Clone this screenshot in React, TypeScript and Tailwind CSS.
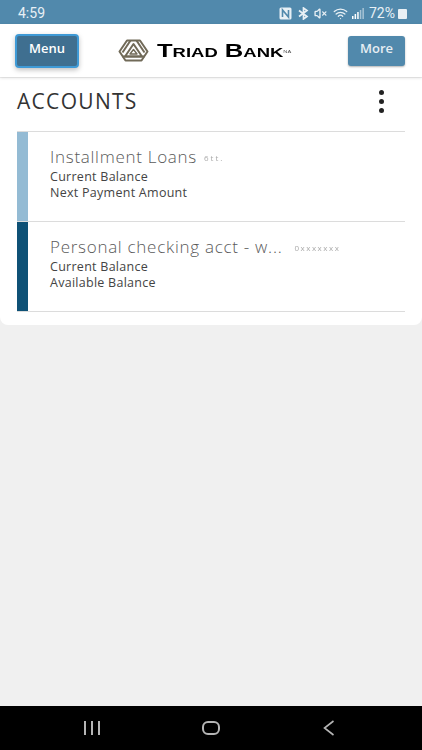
import { VolumeX, Wifi } from "lucide-react";

function TriadLogo() {
  return (
    <svg width="31" height="23" viewBox="0 0 31 23" fill="none" stroke="#716a58" strokeWidth="2" strokeLinejoin="round">
      <path d="M1.5 12.5 L9 1.5 H22 L29.5 12.5 L23.5 21.5 H7.5 Z" />
      <path d="M15.5 5 L7 17.5 H24 Z" />
      <path d="M12.5 1.5 L4.5 13.5" />
      <path d="M18.5 1.5 L26.5 13.5" />
      <path d="M15.5 10.5 L12 15 H19 Z" strokeWidth="1.4" />
      <path d="M4.5 17.5 H26.5" />
    </svg>
  );
}

function NfcBox() {
  return (
    <svg width="13" height="13" viewBox="0 0 13 13" fill="none">
      <rect x="0.5" y="0.5" width="12" height="12" rx="1.5" fill="#e8f0f5" />
      <path d="M3.5 10 V3 L9.5 10 V3" stroke="#5189ac" strokeWidth="1.6" />
    </svg>
  );
}

function BluetoothMark() {
  return (
    <svg width="11" height="13" viewBox="0 0 11 13" fill="none" stroke="#e8f0f5" strokeWidth="1.7">
      <path d="M1 3.5 L9 9.5 L5.5 12 V1 L9 3.5 L1 9.5" />
    </svg>
  );
}

function SignalBars() {
  return (
    <svg width="12" height="11" viewBox="0 0 12 11" fill="#fff">
      <rect x="0" y="8" width="1.5" height="3" />
      <rect x="2.6" y="6" width="1.5" height="5" />
      <rect x="5.2" y="4" width="1.5" height="7" />
      <rect x="7.8" y="2" width="1.5" height="9" opacity="0.5" />
      <rect x="10.4" y="0" width="1.5" height="11" opacity="0.5" />
    </svg>
  );
}

function StatusBar() {
  return (
    <div className="h-6 bg-[#5189ac] flex items-center justify-between pt-[3px] pl-[18px] pr-[15px] text-[#e8f0f5] text-[14px] font-['Roboto',sans-serif]">
      <span>4:59</span>
      <div className="flex items-center">
        <NfcBox />
        <div className="ml-[6px]"><BluetoothMark /></div>
        <VolumeX size={13} strokeWidth={2.5} className="ml-[5px]" />
        <Wifi size={15} strokeWidth={2} className="ml-[6px]" />
        <div className="ml-[4px]"><SignalBars /></div>
        <span className="ml-[5px]">72%</span>
        <div className="ml-[3px] w-[9px] h-[10px] bg-[#e8f0f5] rounded-[1px]" />
      </div>
    </div>
  );
}

function Header() {
  return (
    <header className="h-[53px] bg-white flex items-center justify-between pl-[15px] pr-[17px] shadow-[0_1px_3px_rgba(0,0,0,0.12)] relative font-['Open_Sans',sans-serif]">
      <button className="w-[64px] h-[34px] rounded-[4px] bg-[#3f6f90] border-2 border-[#3f9ad6] text-white text-[13px] font-semibold shadow-[0_2px_5px_rgba(0,0,0,0.25)] pb-[3px]">
        Menu
      </button>
      <div className="flex items-center gap-[8px] mr-[16px]">
        <TriadLogo />
        <span className="w-[136px] flex font-['Liberation_Sans',sans-serif] font-bold text-black text-[18px] leading-none whitespace-nowrap [font-variant:small-caps] origin-left scale-x-[1.42]">
          Triad Bank
          <span className="text-[4px] font-normal text-[#555] self-center mt-[3px]">NA</span>
        </span>
      </div>
      <button className="w-[57px] h-[30px] rounded-[3px] bg-[#5189ac] text-[#e6eef3] text-[13px] font-semibold shadow-[0_1px_2px_rgba(0,0,0,0.3)] pb-[3px]">
        More
      </button>
    </header>
  );
}

type AccountRowProps = {
  name: string;
  masked: string;
  maskClass: string;
  lines: string[];
  color: string;
};

function AccountRow({ name, masked, maskClass, lines, color }: AccountRowProps) {
  return (
    <div className="flex h-[90px] border-b border-[#dcdcdc]">
      <div className={`w-[11px] ${color}`} />
      <div className="pl-[22px] pt-[13px]">
        <div className="flex items-center text-[17px] leading-[22px] font-light tracking-[0.72px] text-[#5a5a5a]">
          {name}
          <span className={`mt-[2px] text-[8px] text-[#aaa] font-normal blur-[0.4px] ${maskClass}`}>{masked}</span>
        </div>
        {lines.map((line) => (
          <div key={line} className="text-[12.5px] leading-[16px] tracking-[0.27px] text-[#444]">
            {line}
          </div>
        ))}
      </div>
    </div>
  );
}

export default function App() {
  return (
    <div className="w-[422px] h-[750px] flex flex-col bg-[#f0f0f0] overflow-hidden font-['Open_Sans',sans-serif]">
      <StatusBar />
      <Header />

      <main className="flex-1">
        {/* Accounts card */}
        <section className="mt-[1px] bg-white rounded-b-[8px] h-[247px] pl-[17px] pr-[17px]">
          <div className="h-[47px] mb-[6px] flex items-center justify-between">
            <h1 className="text-[21px] leading-none font-normal tracking-[1.3px] text-[#333]">ACCOUNTS</h1>
            <div className="flex flex-col gap-[4px] mr-[21px]">
              <span className="w-[5px] h-[5px] rounded-full bg-[#222]" />
              <span className="w-[5px] h-[5px] rounded-full bg-[#222]" />
              <span className="w-[5px] h-[5px] rounded-full bg-[#222]" />
            </div>
          </div>
          <div className="border-t border-[#dcdcdc]">
            <AccountRow
              name="Installment Loans"
              masked="6tt."
              maskClass="ml-[7px] tracking-[2px]"
              lines={["Current Balance", "Next Payment Amount"]}
              color="bg-[#94bbd4]"
            />
            <AccountRow
              name="Personal checking acct - w..."
              masked="0xxxxxxx"
              maskClass="ml-[12px] tracking-[1.5px]"
              lines={["Current Balance", "Available Balance"]}
              color="bg-[#0e5176]"
            />
          </div>
        </section>
      </main>

      {/* Android nav bar */}
      <nav className="h-[44px] bg-black flex items-center justify-between pl-[84px] pr-[87px]">
        <div className="flex gap-[5px]">
          <span className="w-[2px] h-[14px] bg-[#b5b5b5]" />
          <span className="w-[2px] h-[14px] bg-[#b5b5b5]" />
          <span className="w-[2px] h-[14px] bg-[#b5b5b5]" />
        </div>
        <div className="w-[18px] h-[14px] rounded-[6px] border-2 border-[#b5b5b5] mr-[2px]" />
        <svg width="12" height="16" viewBox="0 0 12 16" fill="none" stroke="#b5b5b5" strokeWidth="1.6">
          <path d="M10.5 1 L1.5 8 L10.5 15" />
        </svg>
      </nav>
    </div>
  );
}
